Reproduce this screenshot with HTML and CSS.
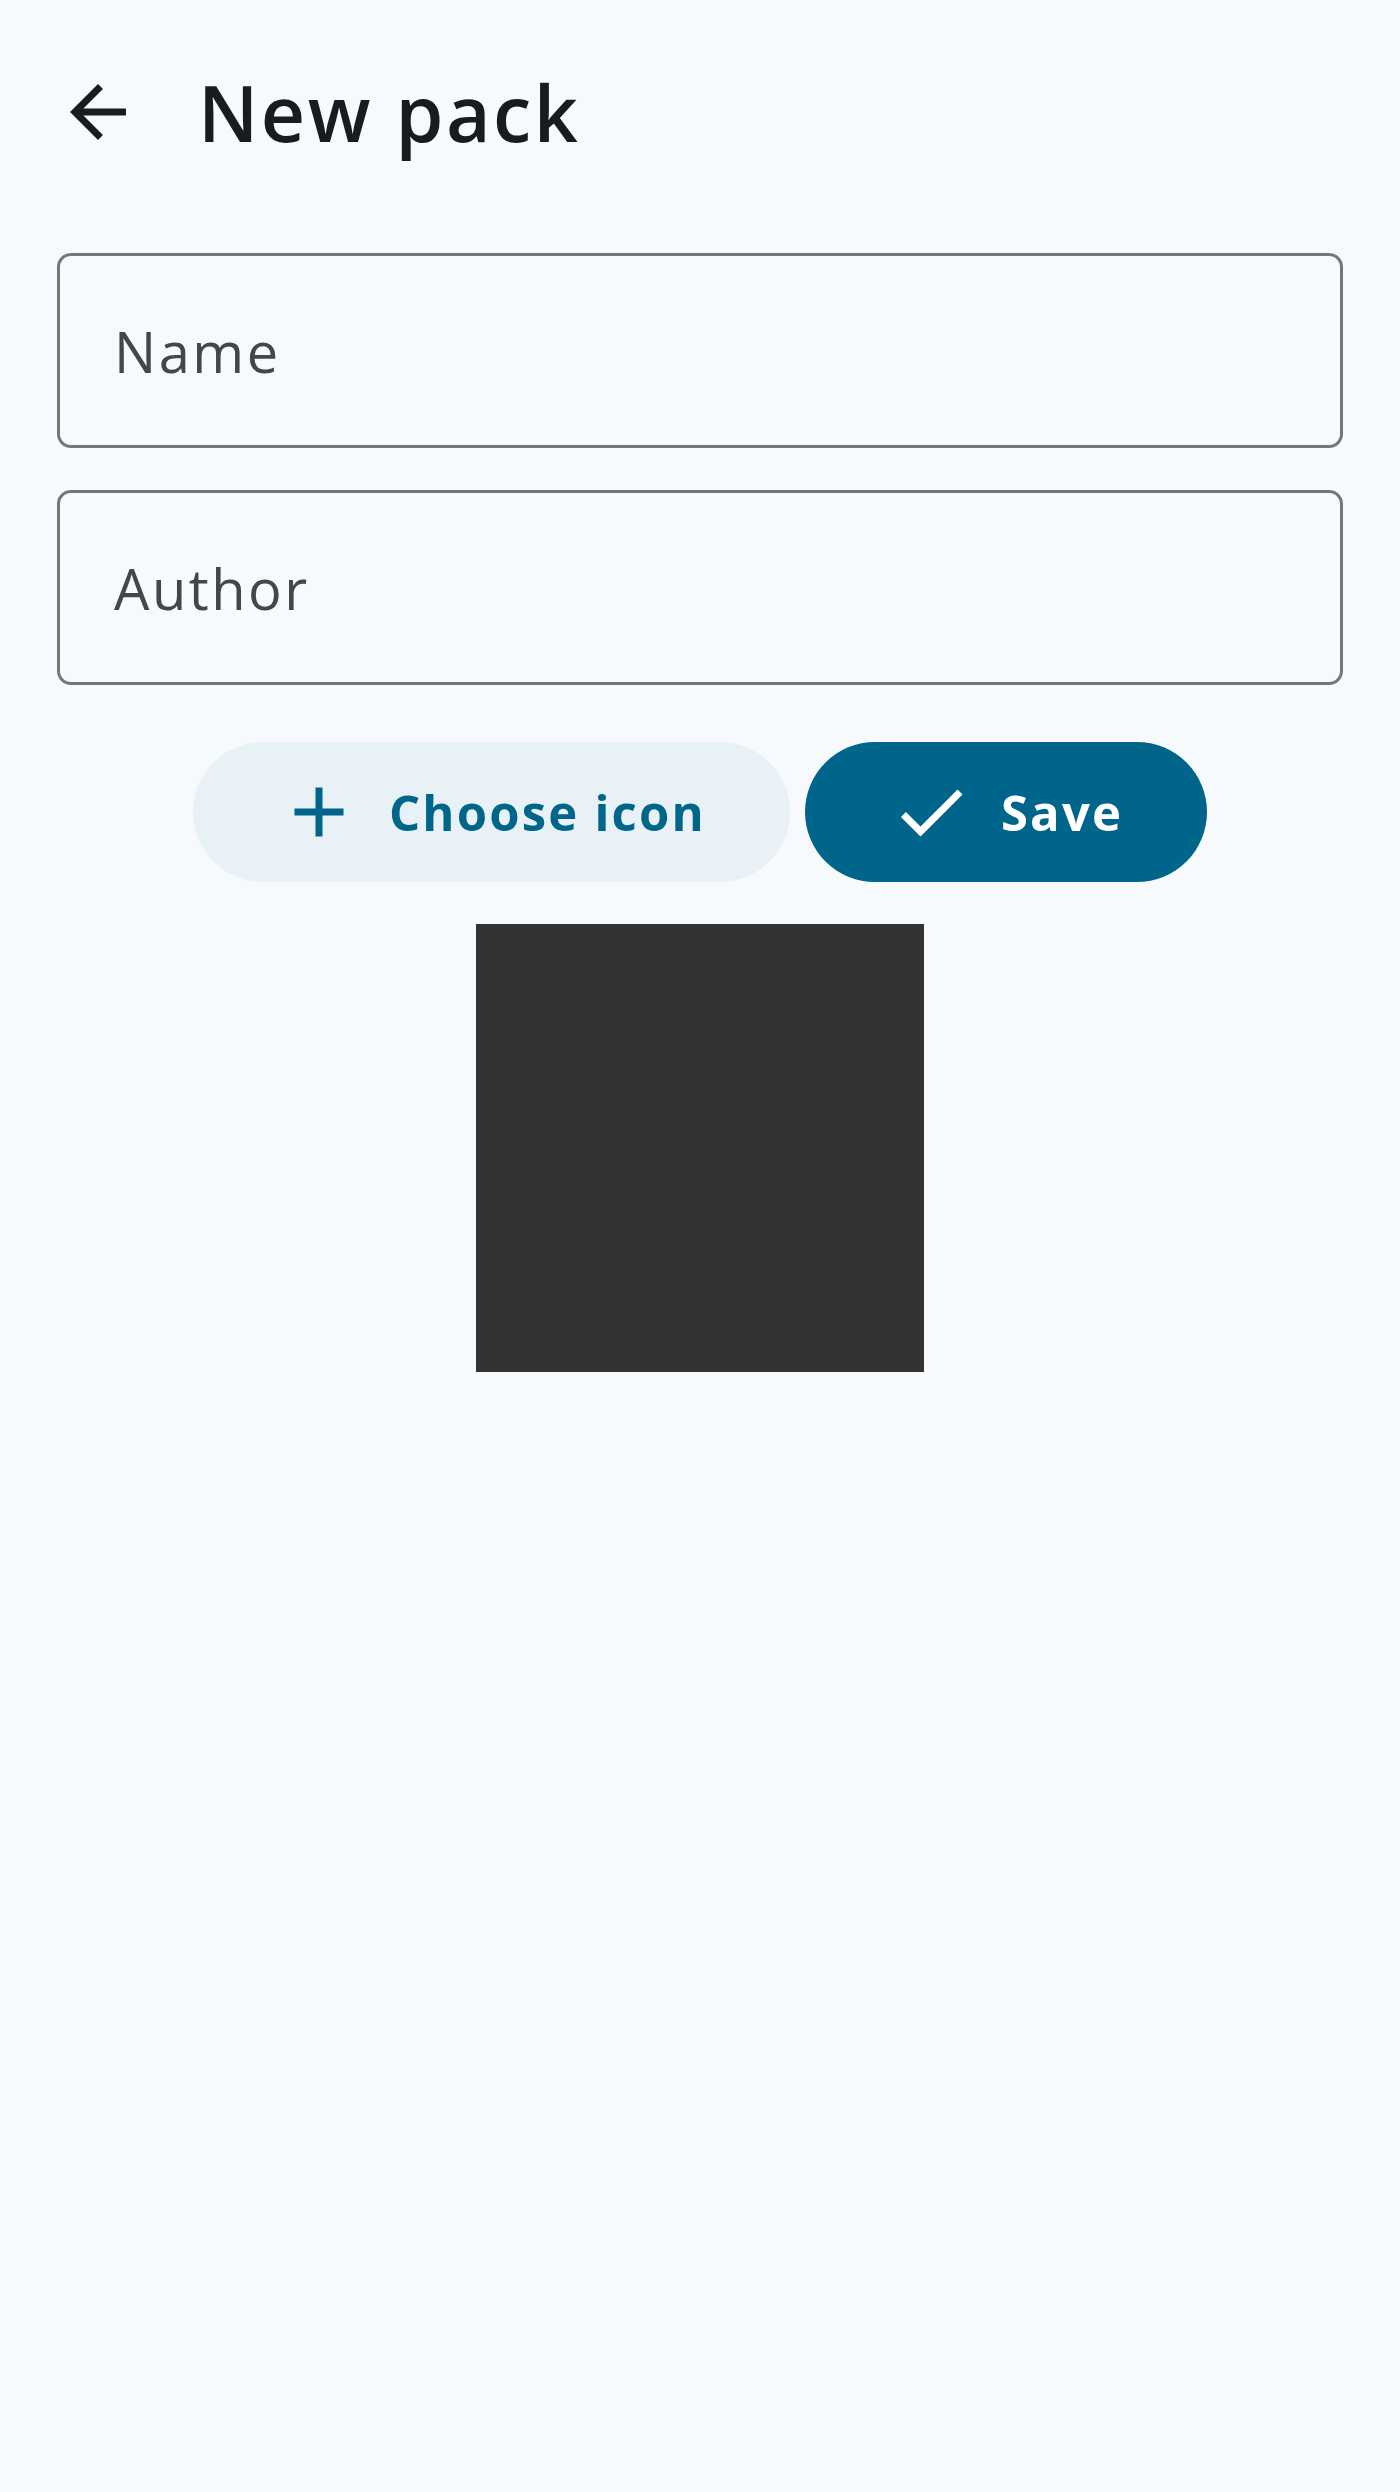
FILE: index.html
```html
<!DOCTYPE html>
<html lang="en">
<head>
<meta charset="utf-8">
<title>New pack</title>
<link rel="stylesheet" href="styles.css">
</head>
<body>
<div class="screen">
  <header class="appbar">
    <button class="nav-btn" aria-label="Back">
      <svg viewBox="0 0 24 24" width="84" height="84"><path d="M20 11H7.83l5.59-5.59L12 4l-8 8 8 8 1.41-1.41L7.83 13H20v-2z" fill="#181c1f"/></svg>
    </button>
    <h1 class="title">New pack</h1>
  </header>
  <main class="form">
    <label class="field"><input class="field-input" type="text" placeholder="Name"></label>
    <label class="field"><input class="field-input" type="text" placeholder="Author"></label>
    <div class="actions">
      <button class="btn btn-tonal">
        <svg class="btn-icon" viewBox="0 0 24 24" width="84" height="84"><path d="M19 13h-6v6h-2v-6H5v-2h6V5h2v6h6v2z" fill="#00658b"/></svg>
        <span class="btn-label">Choose icon</span>
      </button>
      <button class="btn btn-filled">
        <svg class="btn-icon" viewBox="0 0 24 24" width="84" height="84"><path d="M9 16.17L4.83 12l-1.42 1.41L9 19 21 7l-1.41-1.41z" fill="#ffffff"/></svg>
        <span class="btn-label">Save</span>
      </button>
    </div>
    <div class="preview"></div>
  </main>
</div>
</body>
</html>
```

FILE: styles.css
```css
* { box-sizing: border-box; }
html, body {
  margin: 0;
  padding: 0;
  background: #f6fafd;
}
body {
  font-family: "Open Sans", "Liberation Sans", sans-serif;
  color: #181c1f;
  width: 1400px;
  height: 2492px;
}
.screen {
  display: flex;
  flex-direction: column;
}
.appbar {
  height: 224px;
  display: flex;
  align-items: center;
  padding-left: 56px;
}
.nav-btn {
  width: 84px;
  height: 84px;
  padding: 0;
  border: 0;
  background: none;
  display: flex;
}
.title {
  margin: 0 0 0 58px;
  font-size: 77px;
  font-weight: 600;
  letter-spacing: 2.5px;
  color: #181c1f;
  line-height: 1;
}
.form {
  display: flex;
  flex-direction: column;
  align-items: center;
  padding: 29px 57px 0 57px;
}
.field {
  display: block;
  width: 1286px;
  height: 195px;
  border: 3.5px solid #70787e;
  border-radius: 14px;
  margin-bottom: 42px;
}
.field + .field { margin-bottom: 57px; }
.field-input {
  width: 100%;
  height: 100%;
  border: 0;
  background: transparent;
  outline: none;
  padding: 0 0 0 54px;
  font-family: "Open Sans", "Liberation Sans", sans-serif;
  font-size: 56px;
  letter-spacing: 2.5px;
  color: #40484c;
}
.field-input::placeholder {
  color: #40484c;
  opacity: 1;
}
.actions {
  display: flex;
  gap: 15px;
  justify-content: center;
}
.btn {
  height: 140px;
  border: 0;
  border-radius: 70px;
  display: flex;
  align-items: center;
  padding: 0 84px;
  gap: 28px;
  font-family: "Open Sans", "Liberation Sans", sans-serif;
  font-size: 49px;
  font-weight: 700;
  letter-spacing: 2.2px;
}
.btn-icon { flex: none; }
.btn-tonal {
  background: #e8f1f6;
  color: #00658b;
}
.btn-filled {
  background: #00658b;
  color: #ffffff;
}
.preview {
  margin-top: 42px;
  width: 448px;
  height: 448px;
  background: #333333;
}
```
